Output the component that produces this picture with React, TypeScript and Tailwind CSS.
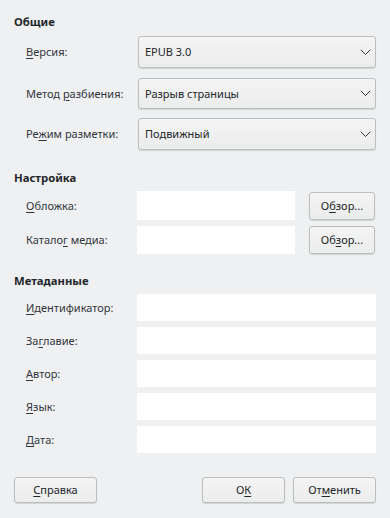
import React from 'react';

const font = { fontFamily: '"Noto Sans", "DejaVu Sans", sans-serif' };

function U({ children }: { children: React.ReactNode }) {
  return <span className="underline underline-offset-[2px] decoration-[1px]">{children}</span>;
}

function Chevron() {
  return (
    <svg width="11" height="7" viewBox="0 0 11 7" className="text-[#31363b]">
      <path d="M0.8 0.8 L5.5 5.5 L10.2 0.8" fill="none" stroke="currentColor" strokeWidth="1" />
    </svg>
  );
}

function Combo({ value, className = '' }: { value: string; className?: string }) {
  return (
    <div
      className={`w-[238px] flex items-center justify-between pl-[6px] pr-[4px] rounded-[3px] border border-[#bcbdbe] bg-gradient-to-b from-[#f4f4f4] to-[#ebecec] shadow-[0_1px_1px_rgba(0,0,0,0.12)] ${className}`}
    >
      <span>{value}</span>
      <Chevron />
    </div>
  );
}

function Button({ children, className = '' }: { children: React.ReactNode; className?: string }) {
  return (
    <div
      className={`flex items-center justify-center rounded-[3px] border border-[#bcbdbe] bg-gradient-to-b from-[#f4f4f4] to-[#ebecec] shadow-[0_1px_1px_rgba(0,0,0,0.12)] ${className}`}
    >
      {children}
    </div>
  );
}

function Label({ children }: { children: React.ReactNode }) {
  return <div className="w-[123px] pl-[12px] shrink-0 whitespace-nowrap text-[#31363b]">{children}</div>;
}

export default function App() {
  return (
    <div style={font} className="w-[390px] h-[518px] bg-[#eff0f1] text-[11px] leading-[16px] text-[#232629] px-[14px] overflow-hidden">
      <div className="pt-[14px] font-bold text-[11.3px]">Общие</div>

      <div className="mt-[6px] flex items-center">
        <Label>
          <U>В</U>ерсия:
        </Label>
        <Combo value="EPUB 3.0" className="h-[32px] ml-[1px]" />
      </div>
      <div className="mt-[10px] flex items-center">
        <Label>
          Метод <U>р</U>азбиения:
        </Label>
        <Combo value="Разрыв страницы" className="h-[31px] ml-[1px]" />
      </div>
      <div className="mt-[9px] flex items-center">
        <Label>
          Ре<U>ж</U>им разметки:
        </Label>
        <Combo value="Подвижный" className="h-[32px] ml-[1px]" />
      </div>

      <div className="mt-[20px] font-bold text-[11.3px]">Настройка</div>

      <div className="mt-[5px] flex items-center">
        <Label>
          <U>О</U>бложка:
        </Label>
        <div className="w-[158px] h-[29px] bg-white" />
        <Button className="ml-[14px] w-[66px] h-[28px]">
          О<U>б</U>зор...
        </Button>
      </div>
      <div className="mt-[6px] flex items-center">
        <Label>
          Катало<U>г</U> медиа:
        </Label>
        <div className="w-[158px] h-[28px] bg-white" />
        <Button className="ml-[14px] w-[66px] h-[28px]">
          Об<U>з</U>ор...
        </Button>
      </div>

      <div className="mt-[19px] font-bold text-[11.3px]">Метаданные</div>

      <div className="mt-[5px] flex flex-col gap-[6px]">
        {[
          [<U key="u">И</U>, 'дентификатор:'],
          ['За', <U key="u">г</U>, 'лавие:'],
          [<U key="u">А</U>, 'втор:'],
          [<U key="u">Я</U>, 'зык:'],
          [<U key="u">Д</U>, 'ата:'],
        ].map((parts, i) => (
          <div key={i} className="flex items-center">
            <Label>{parts}</Label>
            <div className="w-[239px] h-[27px] bg-white" />
          </div>
        ))}
      </div>

      <div className="mt-[24px] flex items-center">
        <Button className="w-[83px] h-[26px]">
          <U>С</U>правка
        </Button>
        <div className="flex-1" />
        <Button className="w-[83px] h-[26px]">
          О<U>К</U>
        </Button>
        <Button className="ml-[8px] w-[83px] h-[26px]">
          От<U>м</U>енить
        </Button>
      </div>
    </div>
  );
}
